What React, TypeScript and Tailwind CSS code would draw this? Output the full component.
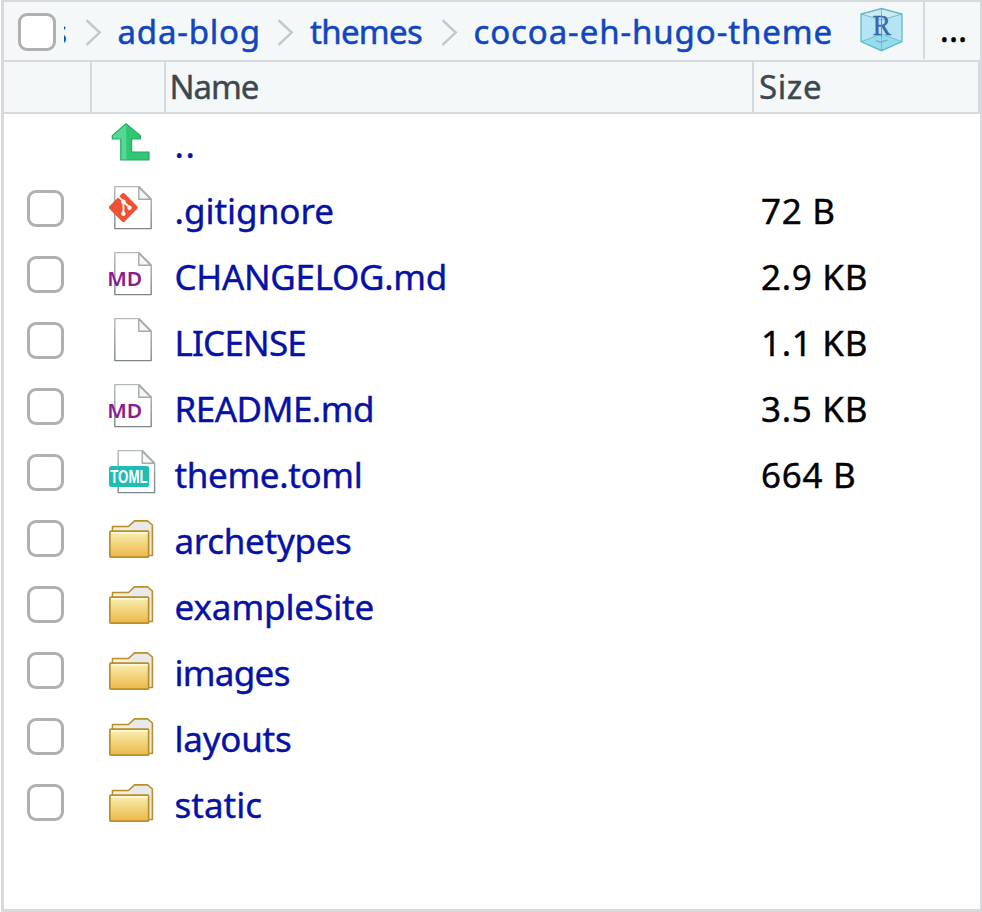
import type { ReactNode } from "react";
import { SiGit } from "react-icons/si";

function Checkbox({ className = "" }: { className?: string }) {
  return (
    <span
      role="checkbox"
      aria-checked="false"
      className={`block shrink-0 rounded-[9px] border-[3px] border-[#b0b0b0] bg-white ${className}`}
    />
  );
}

function Icon({ children }: { children?: ReactNode }) {
  return (
    <svg width="48" height="48" viewBox="0 0 48 48" className="block shrink-0 overflow-visible [-webkit-text-stroke:0px]">
      {children}
    </svg>
  );
}

function Sheet({ x = 6.8 }: { x?: number }) {
  return (
    <g transform={`translate(${x} 1.6)`} strokeWidth="1.4" strokeLinejoin="round">
      <path d="M0 0H24.3L36.4 12.5V42H0Z" fill="#fff" stroke="url(#sheetEdge)" />
      <path d="M24 0.6V12.6H36Z" fill="#f6f7f7" stroke="#a4a9ab" />
    </g>
  );
}

function GitIcon() {
  return (
    <Icon>
      <Sheet />
      <path d="M15.3 9.5 28.3 22.5 15.3 35.5 2.3 22.5Z" fill="#fff" />
      <SiGit x="0.8" y="8" size="29" color="#f05133" />
    </Icon>
  );
}

function MarkdownIcon() {
  return (
    <Icon>
      <Sheet />
      <text x="-0.8" y="34.6" textLength="35" lengthAdjust="spacingAndGlyphs" fill="#8b1c8f" className="font-['Noto_Sans',sans-serif] text-[20.5px] font-semibold">
        MD
      </text>
    </Icon>
  );
}

function FileIcon() {
  return (
    <Icon>
      <Sheet />
    </Icon>
  );
}

function TomlIcon() {
  return (
    <Icon>
      <Sheet x={10.2} />
      <rect x="1" y="17" width="40.2" height="21" rx="2.5" fill="#1fbdb4" />
      <text x="2.2" y="34.1" textLength="37.4" lengthAdjust="spacingAndGlyphs" fill="#fff" className="font-['Liberation_Sans',sans-serif] text-[19px] font-bold">
        TOML
      </text>
    </Icon>
  );
}

function FolderIcon() {
  return (
    <Icon>
      <path d="M4.5 17V11.5H20.5L26.5 5.9H39.5L44.4 10V40.5H39" fill="#e8eaea" stroke="#b98f2a" strokeWidth="1.6" strokeLinejoin="round" />
      <path d="M5.5 13.2H21L24 10.6V15H5.5Z" fill="#f3efdc" />
      <rect x="1.9" y="16.2" width="38.7" height="26" rx="0.8" fill="url(#folderFront)" stroke="#b98f2a" strokeWidth="1.7" />
      <path d="M3 17.8H40" stroke="#fffbe6" strokeWidth="1.2" />
    </Icon>
  );
}

function UpIcon() {
  return (
    <Icon>
      <path d="M18 4.6 4.3 16.6V20H12.8V41H41V33H23.6V20H32.4V16.6Z" fill="#31c675" />
      <path d="M18 4.6 4.3 16.6V20H12.8V41H18.5Z" fill="#52da93" />
      <path d="M18 4.6 4.3 16.6V20H12.8V41H41V33H23.6V20H32.4V16.6Z" fill="none" stroke="#2aa866" strokeWidth="1.2" strokeLinejoin="round" />
    </Icon>
  );
}

function Chevron() {
  return (
    <svg width="16" height="30" viewBox="0 0 16 30" className="block shrink-0">
      <path d="M2 5.4 15.4 17 2 29" fill="none" stroke="#fff" strokeWidth="2" />
      <path d="M0.5 4.2 13.8 16.5 0.5 29" fill="none" stroke="#c4c8d0" strokeWidth="2.6" />
    </svg>
  );
}

function ProjectCube() {
  return (
    <svg width="44" height="46" viewBox="0 0 44 46" className="block shrink-0 [-webkit-text-stroke:0px]">
      <path d="M21.5 1.5 42 7V34.7L21.5 43.7 1 34.7V7Z" fill="#b5e5f5" />
      <path d="M21.5 1.5 42 7 21.5 13 1 7Z" fill="#cdeaf1" />
      <path d="M1 34.7 21.5 27 42 34.7 21.5 43.7Z" fill="#94dcf0" />
      <path d="M1 7 21.5 13 42 7M1 34.7 21.5 27 42 34.7M21.5 1.5V43.7" fill="none" stroke="#70c0cb" strokeWidth="1" />
      <path d="M21.5 1.5 42 7V34.7L21.5 43.7 1 34.7V7Z" fill="none" stroke="#62bac6" strokeWidth="1.3" />
      <path d="M16 33.7 20.5 35.2 27.5 33.2" fill="none" stroke="#77aebd" strokeWidth="1.4" />
      <text x="12.6" y="27.7" textLength="18.5" lengthAdjust="spacingAndGlyphs" fill="#3b67ae" stroke="#3b67ae" strokeWidth="0.3" className="font-['Liberation_Serif',serif] text-[29px]">
        R
      </text>
      <path d="M21.5 8V30" stroke="#479fb8" strokeWidth="1" />
    </svg>
  );
}

type Entry = {
  name: string;
  tracking: string;
  icon: () => ReactNode;
  size?: string;
  parent?: boolean;
};

const entries: Entry[] = [
  { name: "..", tracking: "tracking-[1.5px]", icon: UpIcon, parent: true },
  { name: ".gitignore", tracking: "tracking-normal", icon: GitIcon, size: "72 B" },
  { name: "CHANGELOG.md", tracking: "tracking-[-0.3px]", icon: MarkdownIcon, size: "2.9 KB" },
  { name: "LICENSE", tracking: "tracking-[-0.8px]", icon: FileIcon, size: "1.1 KB" },
  { name: "README.md", tracking: "tracking-[-0.5px]", icon: MarkdownIcon, size: "3.5 KB" },
  { name: "theme.toml", tracking: "tracking-[-0.35px]", icon: TomlIcon, size: "664 B" },
  { name: "archetypes", tracking: "tracking-[-0.3px]", icon: FolderIcon },
  { name: "exampleSite", tracking: "tracking-[-0.1px]", icon: FolderIcon },
  { name: "images", tracking: "tracking-[-0.7px]", icon: FolderIcon },
  { name: "layouts", tracking: "tracking-[-0.25px]", icon: FolderIcon },
  { name: "static", tracking: "tracking-normal", icon: FolderIcon },
];

function Row({ entry }: { entry: Entry }) {
  const EntryIcon = entry.icon;
  return (
    <li className="flex h-[66px] items-center">
      <div className="w-[104px] shrink-0 pb-0.5 pl-[23px]">{!entry.parent && <Checkbox className="size-[37px]" />}</div>
      <EntryIcon />
      <a className={`ml-[18.5px] w-[586.5px] shrink-0 pt-1 text-[#0611a6] ${entry.tracking}`}>{entry.name}</a>
      <span className="pt-1 tracking-[0.7px] text-black">{entry.size}</span>
    </li>
  );
}

export default function App() {
  return (
    <div className="h-[912px] w-[982px] bg-white pl-px font-['Noto_Sans','Open_Sans',sans-serif] whitespace-nowrap">
      <svg width="0" height="0" className="absolute">
        <defs>
          <linearGradient id="folderFront" x1="0" y1="0" x2="0" y2="1">
            <stop offset="0" stopColor="#f8f1b4" />
            <stop offset="1" stopColor="#edb746" />
          </linearGradient>
          <linearGradient id="sheetEdge" x1="0" y1="0" x2="0" y2="1">
            <stop offset="0" stopColor="#b4b9bb" />
            <stop offset="1" stopColor="#7d858a" />
          </linearGradient>
        </defs>
      </svg>
      <div className="flex h-full flex-col overflow-hidden border-t-2 border-r-2 border-b-[3px] border-l-[3px] border-[#d6dadc]">
        <nav className="flex h-[60px] shrink-0 items-start border-b-2 border-[#d6dadc] bg-[#f4f8f9] text-[33px] leading-[60px] text-[#1146bf] [-webkit-text-stroke:0.5px]">
          <Checkbox className="mt-[11px] ml-[14px] size-[38px]" />
          <span className="ml-2 flex w-[3px] shrink-0 justify-end overflow-hidden">
            <span>s</span>
          </span>
          <span className="mt-[14px] ml-[19px]">
            <Chevron />
          </span>
          <a className="ml-[15.5px] w-[160.5px] shrink-0 tracking-[0.8px]">ada-blog</a>
          <span className="mt-[14px]">
            <Chevron />
          </span>
          <a className="ml-4 w-[132px] shrink-0 tracking-[-0.7px]">themes</a>
          <span className="mt-[14px]">
            <Chevron />
          </span>
          <a className="ml-[15.5px] w-[386.5px] shrink-0 tracking-[0.9px]">cocoa-eh-hugo-theme</a>
          <span className="mt-[5px]">
            <ProjectCube />
          </span>
          <button className="ml-[19px] h-[57px] grow border-l-2 border-[#d6dadc] pb-1 pl-[2px] text-center text-[34px] leading-[50px] text-black">
            ...
          </button>
        </nav>
        <div className="flex h-[52px] shrink-0 border-r-2 border-b-2 border-[#d6dadc] bg-[#f4f8f9] text-[33px] leading-[49px] text-[#3c484d] [-webkit-text-stroke:0.4px]">
          <div className="w-[88px] shrink-0 border-r-2 border-[#d6dadc]" />
          <div className="w-[74px] shrink-0 border-r-2 border-[#d6dadc]" />
          <div className="w-[588px] shrink-0 border-r-2 border-[#d6dadc] pl-[3.5px] tracking-[-1.1px]">Name</div>
          <div className="pl-[5px] tracking-[0.6px]">Size</div>
        </div>
        <ul className="-mt-1 text-[35px] leading-[48px] [-webkit-text-stroke:0.4px]">
          {entries.map((entry) => (
            <Row key={entry.name} entry={entry} />
          ))}
        </ul>
      </div>
    </div>
  );
}
